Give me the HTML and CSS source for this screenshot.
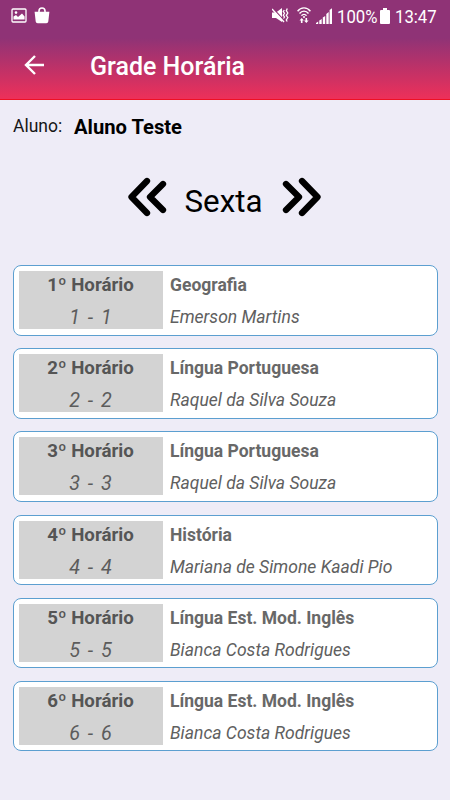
FILE: index.html
```html
<!DOCTYPE html>
<html lang="pt-BR">
<head>
<meta charset="utf-8">
<title>Grade Horária</title>
<link rel="stylesheet" href="styles.css">
</head>
<body>
<header class="top">
  <div class="status">
    <svg class="ic-photo" width="16" height="15" viewBox="0 0 16 15"><rect x="1" y="1" width="14" height="13" rx="1" fill="none" stroke="#fff" stroke-width="1.300"/><circle cx="5" cy="4.600" r="1.300" fill="#fff"/><path d="M2.500 11.500V8.500l2.500-1.500 2 2L11 5.500l2.600 3v3z" fill="#fff"/></svg>
    <svg class="ic-bag" width="16" height="17" viewBox="0 0 16 17"><path d="M5 6V4a3 3 0 0 1 6 0v2" fill="none" stroke="#fff" stroke-width="1.600"/><path d="M.6 4.800h14.800l-1.100 9.700a2 2 0 0 1-2 1.800H3.700a2 2 0 0 1-2-1.800z" fill="#fff"/></svg>
    <svg class="ic-mute" width="17" height="17" viewBox="0 0 17 17"><path d="M0 5.500h4L10 1v14l-6-4H0z" fill="#fff"/><path d="M.8 1.200l12 13" stroke="#8f3376" stroke-width="1.300"/><path d="M0 2l12 13" stroke="#fff" stroke-width="1.400"/><path d="M12.300 3l-1 1.500 1.200 1.800-1.200 1.900 1.200 1.800-1 1.500M15.300 1.500l-1 2.200 1.500 2.300-1.500 2.300 1.500 2.300-1.500 2.400.9 1.500" fill="none" stroke="#fff" stroke-width="1.300"/></svg>
    <svg class="ic-wifi" width="14" height="17" viewBox="0 0 14 17"><path d="M.6 4.200C4-.2 10-.2 13.400 4.200M2.500 6.500c2.500-3.200 6.500-3.200 9 0M4.500 8.700c1.400-1.800 3.600-1.800 5 0" fill="none" stroke="#fff" stroke-width="1.400"/><circle cx="7" cy="10" r="1" fill="#fff"/><path d="M4.700 11l2.200 2.500H5.500V16H3.900v-2.500H2.500zM9.300 16l2.300-2.500h-1.500V11H8.500v2.500H7z" fill="#fff"/></svg>
    <svg class="ic-signal" width="16" height="16" viewBox="0 0 16 16"><path d="M0 16v-1l2.200-1.500V16zM3.300 16v-3.500l2.400-1.500v5zM6.800 16V9.500L9.200 8v8zM10.300 16V6l2.400-2v12zM13.600 16V2L16 .3V16z" fill="#fff"/></svg>
    <span class="pct">100%</span>
    <svg class="ic-batt" width="10" height="16" viewBox="0 0 10 16"><path d="M3 0h4v2h2q1 0 1 1v12q0 1-1 1H1q-1 0-1-1V3q0-1 1-1h2z" fill="#fff"/></svg>
    <span class="clock">13:47</span>
  </div>
  <div class="bar">
    <svg class="back" width="20" height="20" viewBox="0 0 20 20"><path d="M11 1L2 10l9 9M2 10h18" fill="none" stroke="#fff" stroke-width="2.400"/></svg>
    <h1 class="title">Grade Horária</h1>
  </div>
</header>
<main>
  <div class="student"><span class="label">Aluno:</span><span class="name">Aluno Teste</span></div>
  <nav class="day">
    <svg width="40" height="40" viewBox="0 0 40 40"><path d="M20 4L4.500 20l15.500 16M36 7L23 20l13 13" class="chev"/></svg>
    <span class="dayname">Sexta</span>
    <svg width="40" height="40" viewBox="0 0 40 40"><path d="M20 4l15.500 16L20 36M4 7l13 13L4 33" class="chev"/></svg>
  </nav>
  <section class="list">
    <article class="card"><div class="slot"><b class="hour">1º Horário</b><i class="range">1 - 1</i></div><div class="info"><b class="subject">Geografia</b><i class="teacher">Emerson Martins</i></div></article>
    <article class="card"><div class="slot"><b class="hour">2º Horário</b><i class="range">2 - 2</i></div><div class="info"><b class="subject">Língua Portuguesa</b><i class="teacher">Raquel da Silva Souza</i></div></article>
    <article class="card"><div class="slot"><b class="hour">3º Horário</b><i class="range">3 - 3</i></div><div class="info"><b class="subject">Língua Portuguesa</b><i class="teacher">Raquel da Silva Souza</i></div></article>
    <article class="card"><div class="slot"><b class="hour">4º Horário</b><i class="range">4 - 4</i></div><div class="info"><b class="subject">História</b><i class="teacher">Mariana de Simone Kaadi Pio</i></div></article>
    <article class="card"><div class="slot"><b class="hour">5º Horário</b><i class="range">5 - 5</i></div><div class="info"><b class="subject">Língua Est. Mod. Inglês</b><i class="teacher">Bianca Costa Rodrigues</i></div></article>
    <article class="card"><div class="slot"><b class="hour">6º Horário</b><i class="range">6 - 6</i></div><div class="info"><b class="subject">Língua Est. Mod. Inglês</b><i class="teacher">Bianca Costa Rodrigues</i></div></article>
  </section>
</main>
</body>
</html>
```
FILE: styles.css
```css
* { box-sizing: border-box; }
body {
  margin: 0;
  height: 800px;
  overflow: hidden;
  background: #eeecf7;
  font-family: Roboto, "Liberation Sans", sans-serif;
  color: #000;
}
svg { flex: none; display: block; }
.top {
  height: 100px;
  background: linear-gradient(#8f3376 0, #8f3376 38px, #ec305a 98px);
  border-bottom: 1px solid #ee1024;
  color: #fff;
}
.status {
  display: flex;
  align-items: center;
  height: 31px;
  padding-left: 11px;
}
.ic-bag { margin-left: 7px; }
.ic-mute { margin-left: 222px; }
.ic-wifi { margin-left: 8px; }
.ic-signal { margin-left: 5px; }
.pct, .clock {
  font-size: 19px;
  line-height: 31px;
  white-space: nowrap;
  padding-top: 1px;
  transform: scaleX(.88);
  transform-origin: 0 50%;
}
.pct { width: 40px; margin-left: 5px; }
.ic-batt { margin-left: 3px; }
.clock { margin-left: 5px; }
.bar {
  display: flex;
  align-items: center;
  height: 68px;
  padding-left: 24px;
}
.title { margin: 3px 0 0 46px; font-size: 25px; font-weight: 500; line-height: 30px; white-space: nowrap; }
.student { display: flex; height: 54px; padding: 12px 0 0 13px; line-height: 28px; white-space: nowrap; }
.label { width: 61px; font-size: 17.500px; line-height: 28px; color: #161616; }
.name { font-size: 20.200px; font-weight: 700; line-height: 30px; }
.day { display: flex; justify-content: center; align-items: center; height: 86px; margin-right: 2px; }
.dayname { width: 78px; margin: 9px 19px 0 18px; font-size: 31.300px; line-height: 38px; white-space: nowrap; }
.chev { fill: none; stroke: #000; stroke-width: 6.300; stroke-linecap: round; stroke-linejoin: round; }
.list { display: flex; flex-direction: column; gap: 12.700px; padding: 25px 12.500px 0; }
.card {
  display: flex;
  height: 70.500px;
  padding: 5px;
  border: 1px solid #5c9fd0;
  border-radius: 8px;
  background: #fff;
}
.slot, .info { display: flex; flex-direction: column; white-space: nowrap; color: #555; }
.slot { width: 144px; height: 58px; align-items: center; background: #d3d3d3; }
.info { padding-left: 7.500px; color: #686868; }
.hour { font-size: 18.700px; line-height: 28px; }
.range { font-size: 19.800px; line-height: 37px; word-spacing: 3px; color: #5c5c5c; }
.subject { font-size: 17.500px; line-height: 29px; }
.teacher { font-size: 17.550px; line-height: 34px; color: #606060; }
```
